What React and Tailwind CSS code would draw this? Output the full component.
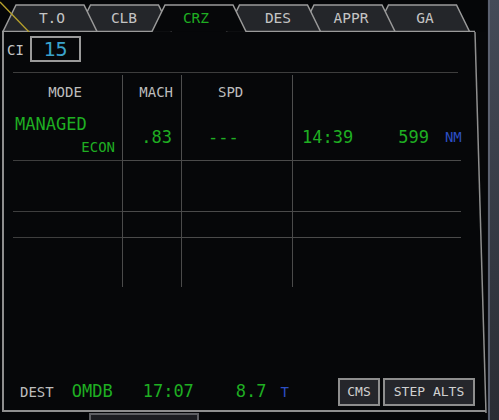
import React from "react";

const MONO = { fontFamily: '"DejaVu Sans Mono", "Liberation Mono", monospace' };

const TABS = [
  { label: "T.O", cx: 52 },
  { label: "CLB", cx: 124 },
  { label: "CRZ", cx: 196 },
  { label: "DES", cx: 278 },
  { label: "APPR", cx: 351 },
  { label: "GA", cx: 425 },
];
const SELECTED = 2;

// Folder-style flight phase tabs: narrow-top trapezoids that overlap,
// earlier tabs stacked over later ones, the active tab on top of all.
function PhaseTabs() {
  const top = 5;
  const bottom = 31.5;
  const slant = 13;
  const w = 94;
  const step = 74.5;
  const x0 = (i) => 3 + step * i;
  const shape = (i) =>
    `M${x0(i)},${bottom} L${x0(i) + slant},${top} L${x0(i) + w - slant},${top} L${x0(i) + w},${bottom}`;
  const order = [5, 4, 3, 1, 0, 2];
  return (
    <svg width="487" height="32" className="block shrink-0">
      {order.map((i) => (
        <path
          key={i}
          d={shape(i)}
          fill={i === SELECTED ? "#060709" : "#24262a"}
          stroke="#9a9a9a"
          strokeWidth="1.5"
        />
      ))}
      <path
        d={`M2,${bottom} H${x0(SELECTED) + 0.5} M${x0(SELECTED) + w - 0.5},${bottom} H475`}
        stroke="#9a9a9a"
        strokeWidth="1.5"
        fill="none"
      />
      {TABS.map((t, i) => (
        <text
          key={t.label}
          x={t.cx}
          y="23"
          textAnchor="middle"
          fontSize="14.5"
          fontFamily='"DejaVu Sans Mono", "Liberation Mono", monospace'
          fill={i === SELECTED ? "#1fae22" : "#c4c4c4"}
        >
          {t.label}
        </text>
      ))}
      <line x1="0" y1="2" x2="29" y2="32" stroke="#b8a22c" strokeWidth="1.3" />
    </svg>
  );
}

function Header({ children, className = "" }) {
  return (
    <div className={`h-[17px] text-[14px] leading-[17px] text-[#bdbdbd] ${className}`}>
      {children}
    </div>
  );
}

export default function App() {
  return (
    <div className="w-[499px] h-[420px] bg-[#050608] flex overflow-hidden" style={MONO}>
      <div className="w-[487px] flex flex-col">
        <PhaseTabs />

        <div className="relative ml-[2px] w-[484px] h-[381px] border-l-2 border-b-2 border-[#8e8e8e] bg-[#060709] flex flex-col">
          {/* slightly tilted right frame edge */}
          <svg className="absolute left-0 top-0 pointer-events-none" width="484" height="381">
            <line x1="471" y1="0" x2="482" y2="381" stroke="#8e8e8e" strokeWidth="1.5" />
          </svg>

          {/* cost index */}
          <div className="flex items-center pt-[4px]">
            <span className="w-[26px] pl-[3px] pt-[2px] text-[14px] text-[#c4c4c4]">CI</span>
            <div className="w-[51px] h-[26px] border-2 border-[#9a9a9a] flex items-center justify-center text-[20px] text-[#3aa3cc]">
              15
            </div>
          </div>

          <div className="mt-[10px] ml-[9px] w-[445px] h-px bg-[#3d3d3d]" />

          {/* speed / time table */}
          <div className="mt-[2px] ml-[9px] grid grid-cols-[109px_59px_111px_169px] grid-rows-[85px_51px_26px_50px]">
            <div className="flex flex-col pt-[9px]">
              <Header className="text-center pr-[5px]">MODE</Header>
              <div className="mt-[13px] pl-[2px] text-[17px] leading-[20px] text-[#1fae22]">MANAGED</div>
              <div className="mt-[5px] pr-[7px] text-right text-[14px] leading-[17px] text-[#1fae22]">ECON</div>
            </div>
            <div className="border-l border-[#4e4e4e] flex flex-col pt-[9px]">
              <Header className="text-right pr-[8px]">MACH</Header>
              <div className="mt-[26px] pr-[9px] text-right text-[17px] leading-[20px] text-[#1fae22]">.83</div>
            </div>
            <div className="border-l border-[#4e4e4e] flex flex-col pt-[9px]">
              <Header className="pl-[36px]">SPD</Header>
              <div className="mt-[26px] pl-[26px] text-[17px] leading-[20px] text-[#1fae22]">---</div>
            </div>
            <div className="border-l border-[#4e4e4e] flex items-start pt-[52px]">
              <span className="ml-[9px] text-[17px] leading-[20px] text-[#1fae22]">14:39</span>
              <span className="ml-[45px] text-[17px] leading-[20px] text-[#1fae22]">599</span>
              <span className="ml-[16px] text-[14px] leading-[20px] text-[#2c4fc4]">NM</span>
            </div>

            {[0, 1, 2].map((r) => (
              <React.Fragment key={r}>
                <div className="border-t border-[#3e3e3e]" />
                <div className="border-t border-l border-[#4a4a4a]" />
                <div className="border-t border-l border-[#4a4a4a]" />
                <div className="border-t border-l border-[#4a4a4a]" />
              </React.Fragment>
            ))}
          </div>

          {/* destination line */}
          <div className="mt-auto mb-[4px] flex items-center">
            <span className="ml-[16px] text-[14px] text-[#bdbdbd]">DEST</span>
            <span className="ml-[18px] text-[17px] text-[#1fae22]">OMDB</span>
            <span className="ml-[30px] text-[17px] text-[#1fae22]">17:07</span>
            <span className="ml-[42px] text-[17px] text-[#1fae22]">8.7</span>
            <span className="ml-[14px] text-[14px] text-[#2c4fc4]">T</span>
            <div className="ml-[49px] w-[42px] h-[28px] border-2 border-[#8e8e8e] bg-[#25262b] flex items-center justify-center text-[13px] text-[#d0d0d0]">
              CMS
            </div>
            <div className="ml-[3px] w-[92px] h-[28px] border-2 border-[#8e8e8e] bg-[#25262b] flex items-center justify-center text-[13px] text-[#d0d0d0]">
              STEP ALTS
            </div>
          </div>
        </div>

        <div className="ml-[89px] mt-[1px] w-[110px] h-[7px] border-t-2 border-x-2 border-[#5e5f63] bg-[#1c1d21]" />
      </div>

      {/* display bezel */}
      <div className="flex-1 flex">
        <div className="w-[1px] bg-[#0b0c10]" />
        <div className="flex-1 bg-gradient-to-b from-[#454b58] to-[#2a2d34] border-l-2 border-[#5b6170]" />
      </div>
    </div>
  );
}
